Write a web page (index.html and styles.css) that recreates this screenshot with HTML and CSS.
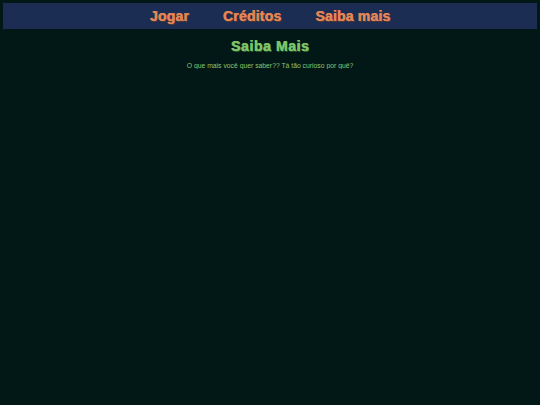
FILE: index.html
```html
<!DOCTYPE html>
<html lang="pt-BR">
<head>
<meta charset="utf-8">
<title>Saiba Mais</title>
<link rel="stylesheet" href="styles.css">
</head>
<body>
<nav class="nav">
  <a class="nav-link" href="#">Jogar</a>
  <a class="nav-link" href="#">Créditos</a>
  <a class="nav-link" href="#">Saiba mais</a>
</nav>
<main class="content">
  <h1 class="title">Saiba Mais</h1>
  <p class="text">O que mais você quer saber?? Tá tão curioso por quê?</p>
</main>
</body>
</html>
```
FILE: styles.css
```css
html, body {
  background: #011816;
}
body {
  margin: 3px;
  font-family: "Liberation Sans", Arial, sans-serif;
}
.nav {
  background: #1b2d52;
  height: 26px;
  display: flex;
  justify-content: center;
  align-items: center;
  gap: 34px;
}
.nav-link {
  color: #e2855a;
  font-weight: bold;
  font-size: 14px;
  text-decoration: none;
  text-shadow: 0.5px 0 0 #e2855a, 1px 1px 0 #5a3a2a;
  letter-spacing: 0.2px;
}
.content {
  text-align: center;
}
.title {
  margin: 9px 0 0;
  color: #7cc46a;
  font-size: 14px;
  font-weight: 900;
  letter-spacing: 0.6px;
  text-shadow: 0.6px 0 0 #7cc46a, 1px 1px 0 #2e5a2a;
}
.text {
  margin: 8px 0 0;
  color: #8fc46c;
  font-size: 6.8px;
}
```
